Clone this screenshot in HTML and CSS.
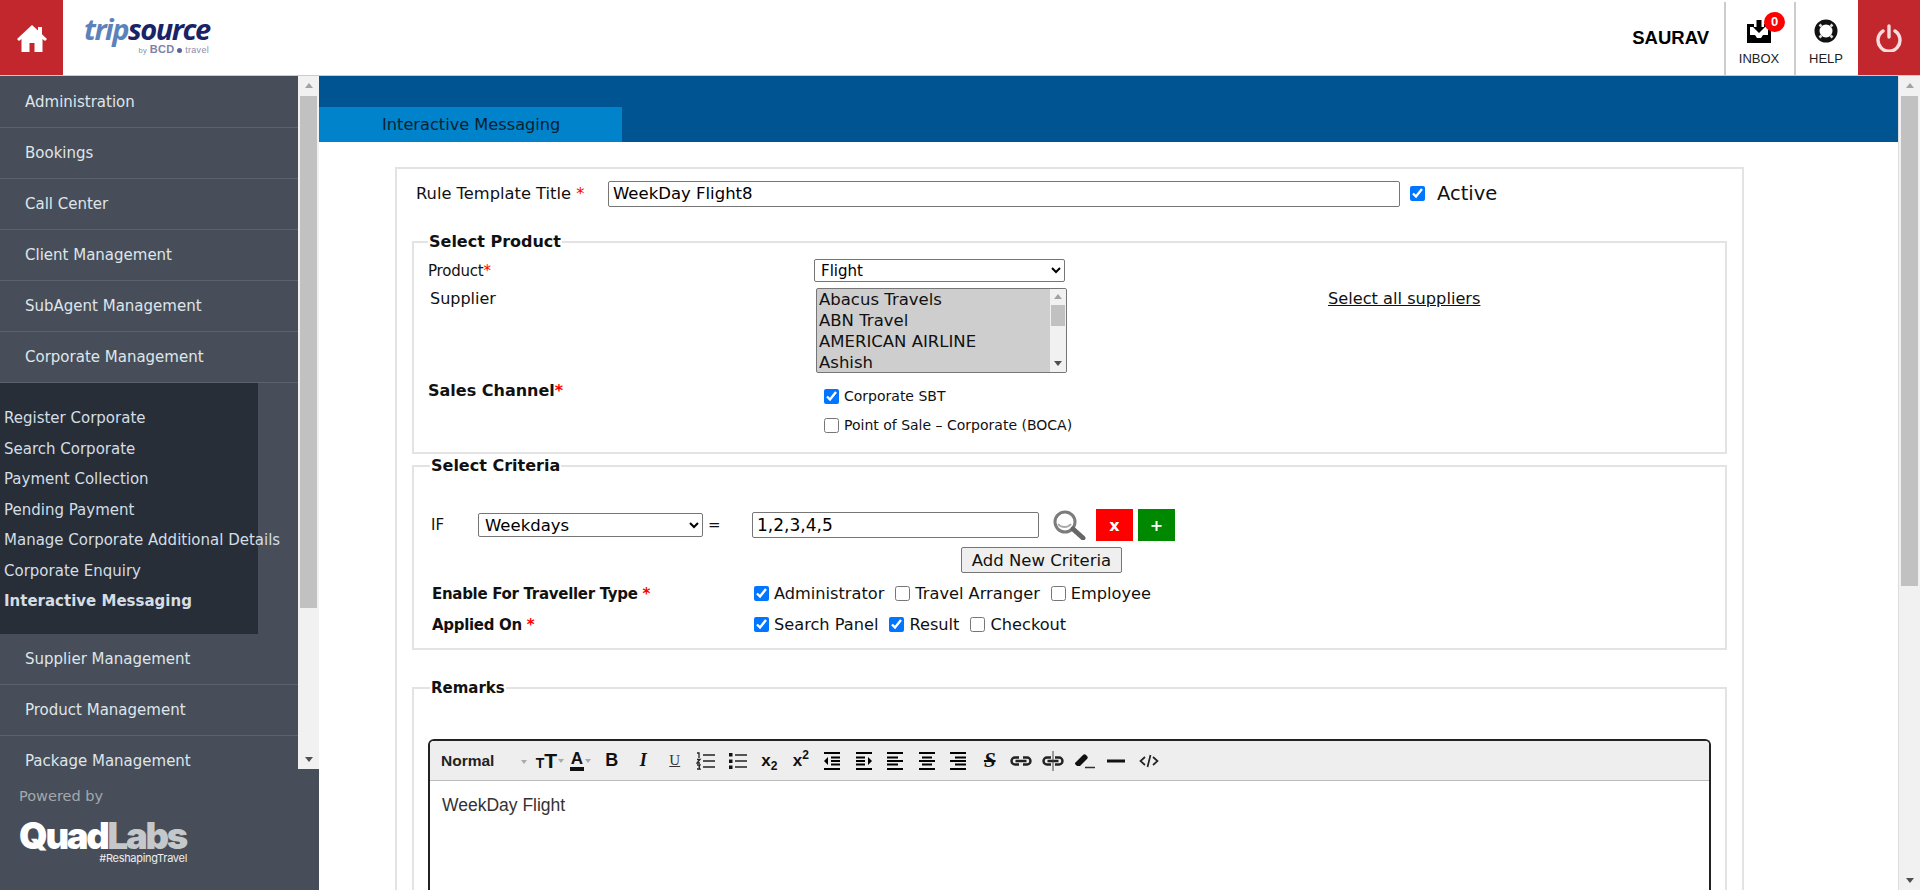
FILE: index.html
```html
<!DOCTYPE html>
<html lang="en">
<head>
	<meta charset="utf-8">
	<title>Interactive Messaging</title>
	<link rel="stylesheet" href="styles.css">
</head>
<body>

<header class="topbar">
	<a class="home" href="#">
		<svg width="30" height="28" viewBox="0 0 30 28"><path fill="#fff" d="M15 1 0 15l2 2 2.500-2V28h8v-9h5v9h8V15l2.500 2 2-2-5-4.700V3h-4v3.500z"/></svg>
	</a>
	<div class="logo">
		<div class="logo-name"><span class="trip">trip</span><span class="source">source</span></div>
		<div class="logo-by"><small>by</small> <b>BCD</b> <i></i> travel</div>
	</div>
	<div class="user">SAURAV</div>
	<a class="tool tool-inbox" href="#">
		<svg width="24" height="24" viewBox="0 0 24 24"><path d="M0 5h7v3H3v8h5l2 3h4l2-3h5V8h-4V5h7v19H0z"/><path d="M9.500 1h5v7H18l-6 6-6-6h3.500z"/></svg>
		<span class="badge">0</span>
		<span>INBOX</span>
	</a>
	<a class="tool" href="#">
		<svg width="24" height="24" viewBox="0 0 24 24"><circle cx="12" cy="12" r="9" fill="none" stroke="#111" stroke-width="5"/><path stroke="#ddd" stroke-width="2.600" d="m7.500 7.500-2-2m11 2 2-2m-11 11-2 2m11-2 2 2"/></svg>
		<span>HELP</span>
	</a>
	<a class="logout" href="#">
		<svg width="26" height="28" viewBox="0 0 26 28"><path fill="none" stroke="#f6dcdc" stroke-width="3.400" stroke-linecap="round" d="M7 7a11 11 0 1 0 12 0M13 2v11"/></svg>
	</a>
</header>

<div class="page">
	<aside class="sidebar">
		<div class="menu-wrap">
			<nav class="menu">
				<a class="menu-item" href="#">Administration</a>
				<a class="menu-item" href="#">Bookings</a>
				<a class="menu-item" href="#">Call Center</a>
				<a class="menu-item" href="#">Client Management</a>
				<a class="menu-item" href="#">SubAgent Management</a>
				<a class="menu-item" href="#">Corporate Management</a>
				<div class="submenu">
					<a href="#">Register Corporate</a>
					<a href="#">Search Corporate</a>
					<a href="#">Payment Collection</a>
					<a href="#">Pending Payment</a>
					<a href="#">Manage Corporate Additional Details</a>
					<a href="#">Corporate Enquiry</a>
					<a href="#" class="current">Interactive Messaging</a>
				</div>
				<a class="menu-item" href="#">Supplier Management</a>
				<a class="menu-item" href="#">Product Management</a>
				<a class="menu-item" href="#">Package Management</a>
			</nav>
			<div class="scrollbar menu-scroll">
				<span class="arrow-up"></span>
				<span class="thumb"></span>
				<span class="arrow-down"></span>
			</div>
		</div>
		<div class="powered">
			<div class="powered-by">Powered by</div>
			<div class="quadlabs"><span class="quad">Quad</span><span class="labs">Labs</span></div>
			<div class="tagline">#ReshapingTravel</div>
		</div>
	</aside>

	<main class="content">
		<div class="tabbar">
			<a class="tab" href="#">Interactive Messaging</a>
		</div>

		<form class="rule-box">
			<div class="title-row">
				<label class="title-label">Rule Template Title <em>*</em></label>
				<input class="title-input" type="text" value="WeekDay Flight8">
				<input class="check" type="checkbox" checked>
				<span class="active-label">Active</span>
			</div>

			<fieldset class="product-set">
				<legend>Select Product</legend>
				<div class="product-row">
					<label class="product-label">Product<em>*</em></label>
					<select class="product-select"><option>Flight</option></select>
				</div>
				<div class="supplier-row">
					<label class="supplier-label">Supplier</label>
					<div class="listbox">
						<div class="listbox-items">
							<div>Abacus Travels</div>
							<div>ABN Travel</div>
							<div>AMERICAN AIRLINE</div>
							<div>Ashish</div>
						</div>
						<div class="scrollbar list-scroll">
							<span class="arrow-up"></span>
							<span class="thumb"></span>
							<span class="arrow-down"></span>
						</div>
					</div>
					<a class="select-all" href="#">Select all suppliers</a>
				</div>
				<div class="channel-row">
					<label class="channel-label">Sales Channel<em>*</em></label>
					<div class="channel-opts">
						<label><input class="check" type="checkbox" checked>Corporate SBT</label>
						<label><input class="check" type="checkbox">Point of Sale – Corporate (BOCA)</label>
					</div>
				</div>
			</fieldset>

			<fieldset class="criteria-set">
				<legend>Select Criteria</legend>
				<div class="if-row">
					<span class="if-label">IF</span>
					<select class="if-select"><option>Weekdays</option></select>
					<span class="equals">=</span>
					<input class="if-input" type="text" value="1,2,3,4,5">
					<svg class="lens" width="34" height="30" viewBox="0 0 34 30"><circle cx="13" cy="12" r="10" fill="#fff" stroke="#7c7c7c" stroke-width="3"/><path d="M6 14c3 4 10 4 13 0" fill="none" stroke="#aaa" stroke-width="2"/><path d="m21 19 10 9" stroke="#666" stroke-width="5" stroke-linecap="round"/></svg>
					<button class="btn-red" type="button">x</button>
					<button class="btn-green" type="button">+</button>
				</div>
				<div class="add-row"><button class="btn-add" type="button">Add New Criteria</button></div>
				<div class="opt-row">
					<label class="opt-label">Enable For Traveller Type <em>*</em></label>
					<div class="opts">
						<label><input class="check" type="checkbox" checked>Administrator</label>
						<label><input class="check" type="checkbox">Travel Arranger</label>
						<label><input class="check" type="checkbox">Employee</label>
					</div>
				</div>
				<div class="opt-row">
					<label class="opt-label">Applied On <em>*</em></label>
					<div class="opts">
						<label><input class="check" type="checkbox" checked>Search Panel</label>
						<label><input class="check" type="checkbox" checked>Result</label>
						<label><input class="check" type="checkbox">Checkout</label>
					</div>
				</div>
			</fieldset>

			<fieldset class="remarks-set">
				<legend>Remarks</legend>
				<div class="editor">
					<div class="toolbar">
						<span class="tb-style">Normal</span><span class="caret caret-style"></span>
						<span class="tb tb-size"><span class="small-t">T</span><span>T</span><span class="caret"></span></span>
						<span class="tb tb-color"><span class="color-a">A</span><span class="caret"></span></span>
						<span class="tb tb-b">B</span>
						<span class="tb tb-i">I</span>
						<span class="tb"><span class="tb-u">U</span></span>
						<span class="tb">
							<svg width="20" height="18" viewBox="0 0 20 18"><path stroke="#222" stroke-width="1.500" d="M7 3h12M7 9h12M7 15h12"/><path stroke="#222" stroke-width="1.300" fill="none" d="M1 1h2v5M1 7.500h3L1 11h3M1 13h3l-1 2 1 2H1"/></svg>
						</span>
						<span class="tb">
							<svg width="20" height="18" viewBox="0 0 20 18"><path stroke="#222" stroke-width="1.500" d="M7 3h12M7 9h12M7 15h12"/><path fill="#111" d="M1 1h3.500v3.500H1zM1 7.500h3.500V11H1zM1 13.500h3.500V17H1z"/></svg>
						</span>
						<span class="tb tb-script"><span>x<sub>2</sub></span></span>
						<span class="tb tb-script"><span>x<sup>2</sup></span></span>
						<span class="tb">
							<svg width="18" height="18" viewBox="0 0 18 18"><path d="M1 0h16v2H1zM8 4.500h9v2H8zM8 8h9v2H8zM8 11.500h9v2H8zM1 16h16v2H1zM5 5v8L1 9z"/></svg>
						</span>
						<span class="tb">
							<svg width="18" height="18" viewBox="0 0 18 18"><path d="M1 0h16v2H1zM1 4.500h9v2H1zM1 8h9v2H1zM1 11.500h9v2H1zM1 16h16v2H1zM13 5v8l4-4z"/></svg>
						</span>
						<span class="tb">
							<svg width="18" height="18" viewBox="0 0 18 18"><path d="M1 0h16v2H1zM1 4.500h11v2H1zM1 8h16v2H1zM1 11.500h11v2H1zM1 16h16v2H1z"/></svg>
						</span>
						<span class="tb">
							<svg width="18" height="18" viewBox="0 0 18 18"><path d="M1 0h16v2H1zM4 4.500h10v2H4zM1 8h16v2H1zM4 11.500h10v2H4zM1 16h16v2H1z"/></svg>
						</span>
						<span class="tb">
							<svg width="18" height="18" viewBox="0 0 18 18"><path d="M1 0h16v2H1zM6 4.500h11v2H6zM1 8h16v2H1zM6 11.500h11v2H6zM1 16h16v2H1z"/></svg>
						</span>
						<span class="tb"><span class="tb-strike">S</span></span>
						<span class="tb">
							<svg width="24" height="12" viewBox="0 0 24 12"><path fill="none" stroke="#222" stroke-width="2.400" d="M10 2.500H6a3.500 3.500 0 0 0 0 7h4M14 2.500h4a3.500 3.500 0 0 1 0 7h-4M6.500 6h11"/></svg>
						</span>
						<span class="tb">
							<svg width="24" height="20" viewBox="0 0 24 20"><path fill="none" stroke="#222" stroke-width="2.400" d="M10 6.500H6a3.500 3.500 0 0 0 0 7h4M14 6.500h4a3.500 3.500 0 0 1 0 7h-4M6.500 10h11"/><path stroke="#444" stroke-width="1" d="M12 0v20"/></svg>
						</span>
						<span class="tb">
							<svg width="21" height="16" viewBox="0 0 21 16"><path d="M1 10 9 2c1-1 2-1 3 0l1 1c1 1 1 2 0 3l-7 7H3l-2-2z" fill="#111"/><path stroke="#333" stroke-width="1.500" d="M11 14.500h10"/></svg>
						</span>
						<span class="tb">
							<svg width="18" height="4" viewBox="0 0 18 4"><path d="M0 .5h18v3H0z" fill="#111"/></svg>
						</span>
						<span class="tb tb-code">
							<svg width="20" height="14" viewBox="0 0 20 14"><path fill="none" stroke="#222" stroke-width="1.700" d="M6 3 1.500 7 6 11M14 3l4.500 4L14 11M11.500 1 8.500 13"/></svg>
						</span>
					</div>
					<div class="editor-body">WeekDay Flight</div>
				</div>
			</fieldset>
		</form>
	</main>

	<div class="scrollbar page-scroll">
		<span class="arrow-up"></span>
		<span class="thumb"></span>
		<span class="arrow-down"></span>
	</div>
</div>

</body>
</html>
```

FILE: styles.css
```css
* {box-sizing: border-box;}

html, body {
	height: 100%;
	margin: 0;
	overflow: hidden;
}
body {
	font-family: "DejaVu Sans", Verdana, sans-serif;
	font-size: 14px;
	color: #111;
	display: flex;
	flex-direction: column;
	background: #fff;
}
a {color: inherit; text-decoration: none;}
em {color: #f00; font-style: normal;}

/* top bar */
.topbar {
	height: 76px;
	flex: none;
	display: flex;
	align-items: stretch;
	border-bottom: 1px solid #ccc;
}
.home {
	width: 63px;
	background: #c1272d;
	display: flex;
	align-items: center;
	justify-content: center;
	padding-top: 1px;
}
.logo {
	margin-left: 21px;
	padding-top: 13px;
	width: 130px;
}
.logo-name {
	font-family: "Open Sans", sans-serif;
	font-size: 29px;
	font-style: italic;
	font-weight: 700;
	line-height: 31px;
	letter-spacing: -1.500px;
}
.trip {color: #5b82ba;}
.source {color: #1a2368;}
.logo-by {
	font-family: "Liberation Sans", sans-serif;
	font-size: 9px;
	color: #8b8fa8;
	text-align: right;
	padding-right: 5px;
	letter-spacing: .3px;
	margin-top: -1px;
}
.logo-by b {font-size: 11px; color: #7d83a8;}
.logo-by i {
	display: inline-block;
	width: 5px;
	height: 5px;
	border-radius: 50%;
	background: #5b6394;
}
.user {
	margin-left: auto;
	font-family: "Liberation Sans", sans-serif;
	font-size: 18.500px;
	font-weight: bold;
	color: #000;
	align-self: center;
	padding-right: 15px;
}
.tool {
	position: relative;
	width: 70px;
	margin-top: 2px;
	border-left: 2px solid #ccc;
	padding: 17px 2px 0 0;
	display: flex;
	flex-direction: column;
	align-items: center;
	font-family: "Liberation Sans", sans-serif;
	font-size: 13px;
	color: #222;
	gap: 8px;
}
.tool + .tool {width: 64px;}
.badge {
	position: absolute;
	top: 10px;
	left: 38px;
	width: 21px;
	height: 20px;
	border-radius: 50%;
	background: #f00;
	color: #fff;
	font-size: 13px;
	font-weight: bold;
	line-height: 19px;
	text-align: center;
}
.logout {
	width: 62px;
	background: #c1272d;
	display: flex;
	align-items: center;
	justify-content: center;
}

/* layout under the bar */
.page {
	flex: 1;
	display: flex;
	min-height: 0;
}

/* sidebar */
.sidebar {
	width: 319px;
	flex: none;
	background: #474e59;
	display: flex;
	flex-direction: column;
}
.menu-wrap {
	height: 693px;
	flex: none;
	display: flex;
	overflow: hidden;
}
.menu {
	width: 298px;
	flex: none;
	overflow: hidden;
	padding-top: 1px;
}
.menu-item {
	display: flex;
	align-items: center;
	height: 51px;
	padding-left: 25px;
	font-size: 15px;
	color: #dfe5ea;
	border-bottom: 1px solid #5b626d;
}
.submenu {
	width: 258px;
	height: 251px;
	background: #272e38;
	padding-top: 20px;
	white-space: nowrap;
}
.submenu a {
	display: block;
	height: 30.500px;
	line-height: 30px;
	padding-left: 4px;
	font-size: 15px;
	color: #d4dde4;
}
.submenu a.current {font-weight: bold;}

/* scrollbars, all three alike */
.scrollbar {
	background: #f1f1f1;
	display: flex;
	flex-direction: column;
	align-items: center;
}
.thumb {
	display: block;
	background: #c1c1c1;
}
.arrow-up, .arrow-down {
	display: block;
	width: 0;
	height: 0;
	border-left: 4px solid transparent;
	border-right: 4px solid transparent;
}
.arrow-up {border-bottom: 5px solid #a3a3a3;}
.arrow-down {border-top: 5px solid #505050;}
.menu-scroll {
	width: 21px;
	flex: none;
}
.menu-scroll .arrow-up {margin: 7px 0 8px;}
.menu-scroll .thumb {width: 17px; height: 512px;}
.menu-scroll .arrow-down {margin-top: auto; margin-bottom: 7px;}

.page-scroll {
	width: 22px;
	flex: none;
	border-left: 1px solid #ddd;
}
.page-scroll .arrow-up {margin: 7px 0 8px;}
.page-scroll .thumb {width: 17px; height: 490px;}
.page-scroll .arrow-down {margin-top: auto; margin-bottom: 7px;}

.list-scroll {
	width: 16px;
	flex: none;
}
.list-scroll .arrow-up {margin: 5px 0 6px;}
.list-scroll .thumb {width: 14px; height: 21px;}
.list-scroll .arrow-down {margin-top: auto; margin-bottom: 6px;}

.powered {
	padding: 19px 0 0 19px;
}
.powered-by {
	font-size: 14.500px;
	color: #a3a8ad;
}
.quadlabs {
	font-family: Inter, sans-serif;
	font-size: 36.500px;
	font-weight: 900;
	letter-spacing: -2.300px;
	line-height: 40px;
	margin-top: 12px;
}
.quad {color: #fff;}
.labs {color: #c5c8cb;}
.tagline {
	font-family: Inter, sans-serif;
	font-size: 11px;
	color: #eee;
	width: 168px;
	text-align: right;
	margin-top: -5px;
	letter-spacing: -.3px;
}

/* main area */
.content {
	flex: 1;
	min-width: 0;
}
.tabbar {
	height: 66px;
	background: #005492;
	padding-top: 31px;
}
.tab {
	display: block;
	width: 303px;
	height: 35px;
	line-height: 36px;
	padding-left: 63px;
	background: #0083cb;
	color: #0a2230;
	font-size: 16.200px;
}

.rule-box {
	margin: 25px 154px 0 76px;
	height: 900px;
	border: 2px solid #e3e3e3;
	padding: 0 15px;
	font-size: 15px;
}
.title-row {
	display: flex;
	align-items: center;
	padding: 11px 0 0 4px;
	height: 38px;
}
.title-label {width: 192px; font-size: 16.300px;}
.title-input {
	width: 792px;
	height: 26px;
	font: 16.500px "DejaVu Sans", sans-serif;
	padding: 0 4px;
	border: 1px solid #767676;
	border-radius: 2px;
}
.check {
	width: 15px;
	height: 15px;
	margin: 0;
	flex: none;
}
.title-row .check {margin: 0 12px 0 10px;}
.active-label {font-size: 19.500px;}

fieldset {
	margin: 0;
	border: 2px solid #e3e3e3;
	padding: 0 14px;
	min-width: 0;
}
legend {
	font-weight: bold;
	padding: 0 1px;
	line-height: 20px;
}
.product-set {height: 222px; margin-top: 25px;}
.product-set legend {font-size: 16px;}
.product-row {
	display: flex;
	align-items: center;
	height: 23px;
	margin-top: 7px;
}
.product-label {
	width: 386px;
	font-size: 15px;
	letter-spacing: -.2px;
}
.product-select {
	width: 251px;
	height: 23px;
	font: 15px "DejaVu Sans", sans-serif;
	padding-left: 2px;
	border: 1px solid #767676;
	border-radius: 2px;
	background: #fff;
}
.supplier-row {
	display: flex;
	margin-top: 6px;
}
.supplier-label {
	width: 388px;
	padding: 1px 0 0 2px;
	font-size: 16px;
}
.listbox {
	width: 251px;
	height: 85px;
	display: flex;
	border: 1px solid #767676;
	border-radius: 2px;
	background: #cecece;
	overflow: hidden;
	font-size: 16.500px;
}
.listbox-items {
	flex: 1;
	line-height: 21px;
	padding-left: 2px;
}
.select-all {
	margin: 1px 0 0 261px;
	text-decoration: underline;
	font-size: 16.200px;
}
.channel-row {
	display: flex;
	margin-top: 8px;
}
.channel-label {
	width: 396px;
	font-weight: bold;
	font-size: 16px;
}
.channel-opts {
	display: flex;
	flex-direction: column;
	gap: 13px;
	padding-top: 7px;
	font-size: 14px;
}
.channel-opts label,
.opts label {
	display: flex;
	align-items: center;
}
.channel-opts .check {margin-right: 5px;}

.criteria-set {height: 194px; margin-top: 2px;}
.criteria-set legend {
	font-size: 16px;
	margin-left: 2px;
}
.if-row {
	display: flex;
	align-items: center;
	margin-top: 33px;
	height: 32px;
	padding-left: 3px;
}
.if-label {width: 47px;}
.if-select {
	width: 225px;
	height: 24px;
	font: 16.500px "DejaVu Sans", sans-serif;
	padding-left: 2px;
	border: 1px solid #767676;
	border-radius: 2px;
	background: #fff;
}
.equals {width: 49px; padding-left: 5px;}
.if-input {
	width: 287px;
	height: 26px;
	font: 17px "DejaVu Sans", sans-serif;
	padding: 0 4px;
	border: 1px solid #767676;
	border-radius: 2px;
}
.lens {margin: 0 10px 0 13px;}
.btn-red, .btn-green {
	width: 37px;
	height: 32px;
	border: 0;
	padding: 0;
	color: #fff;
	font: bold 16px "DejaVu Sans", sans-serif;
}
.btn-red {background: #f00; margin-right: 5px;}
.btn-green {background: #080;}
.add-row {
	margin: 6px 0 0 533px;
}
.btn-add {
	width: 161px;
	height: 26px;
	padding: 0;
	font: 16.500px "DejaVu Sans", sans-serif;
	color: #111;
	background: #efefef;
	border: 1px solid #767676;
	border-radius: 2px;
}
.opt-row {
	display: flex;
	align-items: center;
	height: 31px;
	padding-left: 4px;
}
.add-row + .opt-row {margin-top: 5px;}
.opt-label {
	width: 322px;
	font-weight: bold;
	font-size: 15px;
	letter-spacing: -.3px;
}
.opts {
	display: flex;
	font-size: 16.200px;
	gap: 11px;
}
.opts .check {margin-right: 5px;}

.remarks-set {height: 500px; margin-top: 28px;}
.remarks-set legend {font-size: 15px; margin-left: 2px;}

.editor {
	margin: 41px 0 0 0;
	width: 1283px;
	height: 400px;
	border: 2px solid #222;
	border-bottom: 0;
	border-radius: 6px 6px 0 0;
	overflow: hidden;
}
.toolbar {
	height: 40px;
	background: #eee;
	border-bottom: 1px solid #bbb;
	display: flex;
	align-items: center;
	padding-left: 11px;
	font-family: "Liberation Sans", sans-serif;
}
.tb-style {
	font-weight: bold;
	font-size: 15.500px;
	width: 80px;
	color: #222;
}
.caret {
	display: inline-block;
	width: 0;
	height: 0;
	border-left: 3px solid transparent;
	border-right: 3px solid transparent;
	border-top: 4px solid #aaa;
	margin-left: 1px;
}
.caret-style {margin: 2px 0 0 0;}
.tb {
	width: 31.500px;
	flex: none;
	display: flex;
	align-items: center;
	justify-content: center;
	color: #111;
	font-weight: bold;
	font-size: 18px;
}
.tb-size {
	margin-left: 8px;
	width: 30px;
	font-size: 21px;
}
.small-t {font-size: 14px; margin-top: 5px;}
.tb-color {width: 31px;}
.color-a {
	border-bottom: 4px solid #111;
	line-height: 17px;
	font-size: 17px;
	padding: 0 1px;
}
.tb-i {font-style: italic; font-family: "Liberation Serif", serif;}
.tb-u {
	font-weight: normal;
	font-size: 15px;
	text-decoration: underline;
	font-family: "Liberation Serif", serif;
	color: #333;
}
.tb-script {font-size: 17px;}
.tb-script sub, .tb-script sup {font-size: 12px; line-height: 0;}
.tb-strike {
	font-size: 21px;
	font-style: italic;
	font-family: "Liberation Serif", serif;
	text-decoration: line-through;
}
.tb-code {margin-left: 2px;}
.editor-body {
	padding: 13px 12px;
	font: 17.500px/22px "Liberation Sans", sans-serif;
	color: #333;
}
```
